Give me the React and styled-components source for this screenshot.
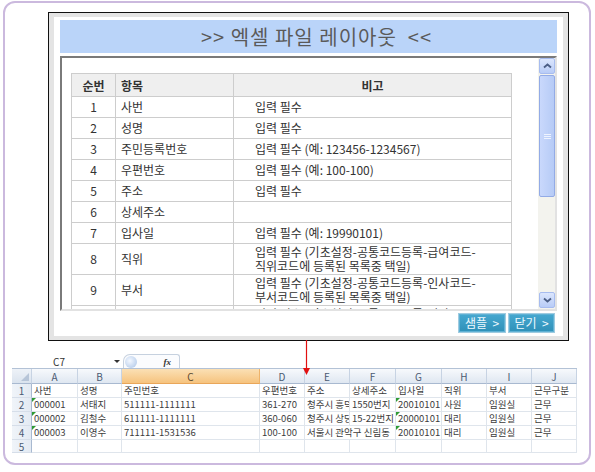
import React from 'react';
import styled, { createGlobalStyle, css } from 'styled-components';

const Global = createGlobalStyle`
  html, body { margin: 0; padding: 0; background: #fff; }
  body { font-family: "Noto Sans CJK KR", "Noto Sans", sans-serif; }
  * { box-sizing: border-box; }
`;

const Frame = styled.div`
  position: relative;
  width: 588px;
  height: 464px;
  margin: 1px 0 0 3px;
  border: 2px solid #cbb9de;
  border-radius: 12px;
  padding: 9px 0 0 7px;
  display: flex;
  flex-direction: column;
  align-items: flex-start;
`;

const Dialog = styled.div`
  width: 521px;
  height: 329px;
  margin-left: 36px;
  border: 1px solid #111;
  background: #e4e4e4;
  padding: 4px 5px;
  display: flex;
`;

const Panel = styled.div`
  flex: 1;
  background: #fff;
  padding: 3px 6px;
  display: flex;
  flex-direction: column;
  min-width: 0;
`;

const Title = styled.div`
  flex: none;
  height: 33px;
  background: #bad4f9;
  display: flex;
  align-items: center;
  justify-content: center;
  padding-left: 16px;
  font-size: 20px;
  color: #5a5a5a;
  letter-spacing: 1px;
  white-space: pre;
`;

const ContentBox = styled.div`
  margin-top: 3px;
  flex: 1;
  min-height: 0;
  border-style: solid;
  border-width: 2px;
  border-color: #7a7a7a #e2e2e2 #e2e2e2 #7a7a7a;
  display: flex;
`;

const TableArea = styled.div`
  flex: 1;
  overflow: hidden;
  padding: 15px 0 0 9px;
`;

const Table = styled.table`
  width: 440px;
  border-collapse: collapse;
  table-layout: fixed;
  font-size: 12px;
  color: #333;
`;

const Col = styled.col`
  width: ${p => p.$w}px;
`;

const HeadRow = styled.tr`
  height: 23px;
`;

const BodyRow = styled.tr`
  height: ${p => (p.$tall ? 31 : 21)}px;
`;

const Th = styled.th`
  background: #efefef;
  border: 1px solid #cdcdcd;
  font-weight: bold;
  color: #333;
  text-align: ${p => p.$align || 'center'};
  padding: 0 0 0 ${p => p.$pl || 0}px;
`;

const Td = styled.td`
  border: 1px solid #cdcdcd;
  text-align: ${p => p.$align || 'left'};
  padding: 0 0 0 ${p => p.$pl || 0}px;
  line-height: 14px;
  vertical-align: ${p => (p.$top ? 'top' : 'middle')};
  padding-top: ${p => (p.$top ? 1 : 0)}px;
  white-space: nowrap;
  overflow: hidden;
`;

const ScrollBar = styled.div`
  flex: none;
  width: 17px;
  background: #f3f3ee;
  display: flex;
  flex-direction: column;
  padding: 0 0 1px 1px;
`;

const ScrollBtn = styled.div`
  height: 16px;
  border: 1px solid #a7bcef;
  border-radius: 2px;
  background: linear-gradient(#dbe6fd, #b8ccf7);
  display: flex;
  align-items: center;
  justify-content: center;
`;

const Thumb = styled.div`
  margin-top: 1px;
  height: 122px;
  border: 1px solid #93abe6;
  border-radius: 2px;
  background: linear-gradient(90deg, #c9d8fc, #b6cbf6);
  display: flex;
  align-items: center;
  justify-content: center;
`;

const Track = styled.div`
  flex: 1;
`;

const ButtonRow = styled.div`
  flex: none;
  margin-top: 2px;
  height: 20px;
  display: flex;
  justify-content: flex-end;
  gap: 2px;
  padding-right: 2px;
`;

const Btn = styled.button`
  width: ${p => p.$w}px;
  height: 20px;
  padding: 0;
  border: 1px solid #9fcbe0;
  box-shadow: inset 0 0 0 1px #5fb1d4;
  background: linear-gradient(#46a8d0, #2f90b8);
  color: #eef9ff;
  font-family: "Noto Sans CJK KR", sans-serif;
  font-size: 12px;
  line-height: 18px;
  white-space: pre;
`;

const Sheet = styled.div`
  margin-top: 13px;
  width: 565px;
`;

const FormulaRow = styled.div`
  height: 14px;
  display: flex;
  align-items: stretch;
`;

const NameBox = styled.div`
  width: 111px;
  display: flex;
  align-items: center;
  justify-content: space-between;
  padding: 0 3px 0 41px;
  font-size: 10px;
  color: #333;
`;

const Caret = styled.span`
  width: 0;
  height: 0;
  border-left: 3px solid transparent;
  border-right: 3px solid transparent;
  border-top: 3px solid #333;
`;

const Pill = styled.div`
  width: 57px;
  border: 1px solid #c6d1df;
  border-bottom: none;
  border-radius: 7px 3px 0 0;
  display: flex;
  align-items: center;
  justify-content: space-between;
  padding: 0 8px 0 1px;
  background: #fbfcfe;
`;

const Lens = styled.span`
  width: 12px;
  height: 12px;
  border-radius: 50%;
  background: radial-gradient(circle at 40% 40%, #f4f8ff, #a9c3e6);
`;

const Fx = styled.span`
  font-family: "Liberation Serif", serif;
  font-style: italic;
  font-weight: bold;
  font-size: 9px;
  color: #333;
`;

const Grid = styled.div`
  display: grid;
  grid-template-columns: 20px 46px 44px 138px 45px 45px 46px 46px 45px 45px 45px;
  grid-template-rows: 15px 14px 14px 14px 14px 13px;
  border-top: 1px solid #b3c2d6;
  font-size: 9.5px;
  color: #3c3c3c;
`;

const headBase = css`
  display: flex;
  align-items: center;
  justify-content: center;
  border-right: 1px solid #c7d3e3;
  border-bottom: 1px solid #a8b9d0;
  color: #4b5a72;
  font-size: 10px;
`;

const ColHead = styled.div`
  ${headBase};
  background: ${p =>
    p.$sel
      ? 'linear-gradient(#fbe0b5, #f6c37e)'
      : 'linear-gradient(#f7f9fc, #dfe7f1)'};
  border-right-color: ${p => (p.$sel ? '#eeb36a' : '#c7d3e3')};
  border-bottom-color: ${p => (p.$sel ? '#e9a659' : '#a8b9d0')};
  color: ${p => (p.$sel ? '#5a4a30' : '#4b5a72')};
`;

const Corner = styled.div`
  ${headBase};
  position: relative;
  background: linear-gradient(#eef2f8, #dae3ee);
  &::after {
    content: '';
    position: absolute;
    right: 2px;
    bottom: 2px;
    border-left: 8px solid transparent;
    border-bottom: 8px solid #b7c5d8;
  }
`;

const RowHead = styled.div`
  ${headBase};
  background: linear-gradient(90deg, #f0f4f9, #e3eaf3);
  border-bottom-color: #d6dee9;
  border-right-color: #a8b9d0;
`;

const Cell = styled.div`
  position: relative;
  border-right: 1px solid #dfe5ec;
  border-bottom: 1px solid #dfe5ec;
  padding-left: 2px;
  line-height: 13px;
  white-space: nowrap;
  overflow: hidden;
  ${p => p.$span && css`grid-column: span ${p.$span};`}
  ${p =>
    p.$flag &&
    css`
      &::before {
        content: '';
        position: absolute;
        left: 0;
        top: 0;
        border-top: 4px solid #2e9a34;
        border-right: 4px solid transparent;
      }
    `}
`;

const Arrow = styled.svg`
  position: absolute;
  left: 297px;
  top: 337px;
`;

const rows = [
  [1, '사번', '입력 필수'],
  [2, '성명', '입력 필수'],
  [3, '주민등록번호', '입력 필수 (예: 123456-1234567)'],
  [4, '우편번호', '입력 필수 (예: 100-100)'],
  [5, '주소', '입력 필수'],
  [6, '상세주소', ''],
  [7, '입사일', '입력 필수 (예: 19990101)'],
  [8, '직위', ['입력 필수 (기초설정-공통코드등록-급여코드-', '직위코드에 등록된 목록중 택일)']],
  [9, '부서', ['입력 필수 (기초설정-공통코드등록-인사코드-', '부서코드에 등록된 목록중 택일)']],
  [10, '근무구분', ['입력 필수 (기초설정-공통코드등록-인사코드-', '근무구분코드에 등록된 목록중 택일)']],
];

const letters = ['A', 'B', 'C', 'D', 'E', 'F', 'G', 'H', 'I', 'J'];

const sheetRows = [
  [{ t: '사번' }, { t: '성명' }, { t: '주민번호' }, { t: '우편번호' }, { t: '주소' }, { t: '상세주소' }, { t: '입사일' }, { t: '직위' }, { t: '부서' }, { t: '근무구분' }],
  [{ t: '000001', f: 1 }, { t: '서태지' }, { t: '511111-1111111' }, { t: '361-270' }, { t: '청주시 흥덕구' }, { t: '1550번지' }, { t: '20010101', f: 1 }, { t: '사원' }, { t: '임원실' }, { t: '근무' }],
  [{ t: '000002', f: 1 }, { t: '김철수' }, { t: '611111-1111111' }, { t: '360-060' }, { t: '청주시 상당구' }, { t: '15-22번지' }, { t: '20000101', f: 1 }, { t: '대리' }, { t: '임원실' }, { t: '근무' }],
  [{ t: '000003', f: 1 }, { t: '이영수' }, { t: '711111-1531536' }, { t: '100-100' }, { t: '서울시 관악구 신림동', s: 2 }, { t: '20010101', f: 1 }, { t: '대리' }, { t: '임원실' }, { t: '근무' }],
  [{}, {}, {}, {}, {}, {}, {}, {}, {}, {}],
];

const Chevron = ({ down }) => (
  <svg width="9" height="6" viewBox="0 0 9 6">
    <path
      d={down ? 'M1 1.5 L4.5 4.5 L8 1.5' : 'M1 4.5 L4.5 1.5 L8 4.5'}
      fill="none"
      stroke="#4c5f86"
      strokeWidth="1.8"
    />
  </svg>
);

const Grip = () => (
  <svg width="7" height="7" viewBox="0 0 7 7">
    <path d="M0 1.5h7M0 3.5h7M0 5.5h7" stroke="#eef3ff" strokeWidth="1" />
  </svg>
);

export default function App() {
  return (
    <>
      <Global />
      <Frame>
        <Dialog>
          <Panel>
            <Title>{'>> 엑셀 파일 레이아웃  <<'}</Title>
            <ContentBox>
              <TableArea>
                <Table>
                  <colgroup>
                    <Col $w={44} />
                    <Col $w={118} />
                    <Col $w={278} />
                  </colgroup>
                  <thead>
                    <HeadRow>
                      <Th>순번</Th>
                      <Th $align="left" $pl={5}>항목</Th>
                      <Th>비고</Th>
                    </HeadRow>
                  </thead>
                  <tbody>
                    {rows.map(([n, item, note]) => {
                      const tall = Array.isArray(note);
                      return (
                        <BodyRow key={n} $tall={tall}>
                          <Td $align="center">{n}</Td>
                          <Td $pl={5}>{item}</Td>
                          <Td $pl={21} $top={tall}>
                            {tall ? (
                              <>
                                {note[0]}
                                <br />
                                {note[1]}
                              </>
                            ) : (
                              note
                            )}
                          </Td>
                        </BodyRow>
                      );
                    })}
                  </tbody>
                </Table>
              </TableArea>
              <ScrollBar>
                <ScrollBtn>
                  <Chevron />
                </ScrollBtn>
                <Thumb>
                  <Grip />
                </Thumb>
                <Track />
                <ScrollBtn>
                  <Chevron down />
                </ScrollBtn>
              </ScrollBar>
            </ContentBox>
            <ButtonRow>
              <Btn $w={48}>{'샘플  >'}</Btn>
              <Btn $w={47}>{'닫기  >'}</Btn>
            </ButtonRow>
          </Panel>
        </Dialog>

        <Sheet>
          <FormulaRow>
            <NameBox>
              C7
              <Caret />
            </NameBox>
            <Pill>
              <Lens />
              <Fx>fx</Fx>
            </Pill>
          </FormulaRow>
          <Grid>
            <Corner />
            {letters.map(l => (
              <ColHead key={l} $sel={l === 'C'}>
                {l}
              </ColHead>
            ))}
            {sheetRows.map((r, i) => (
              <React.Fragment key={i}>
                <RowHead>{i + 1}</RowHead>
                {r.map((c, j) => (
                  <Cell key={j} $span={c.s} $flag={c.f}>
                    {c.t || ''}
                  </Cell>
                ))}
              </React.Fragment>
            ))}
          </Grid>
        </Sheet>

        <Arrow width="9" height="35" viewBox="0 0 9 35">
          <line x1="4.5" y1="0" x2="4.5" y2="29" stroke="#e21010" strokeWidth="1.2" />
          <polygon points="1,28 8,28 4.5,35" fill="#e21010" />
        </Arrow>
      </Frame>
    </>
  );
}
